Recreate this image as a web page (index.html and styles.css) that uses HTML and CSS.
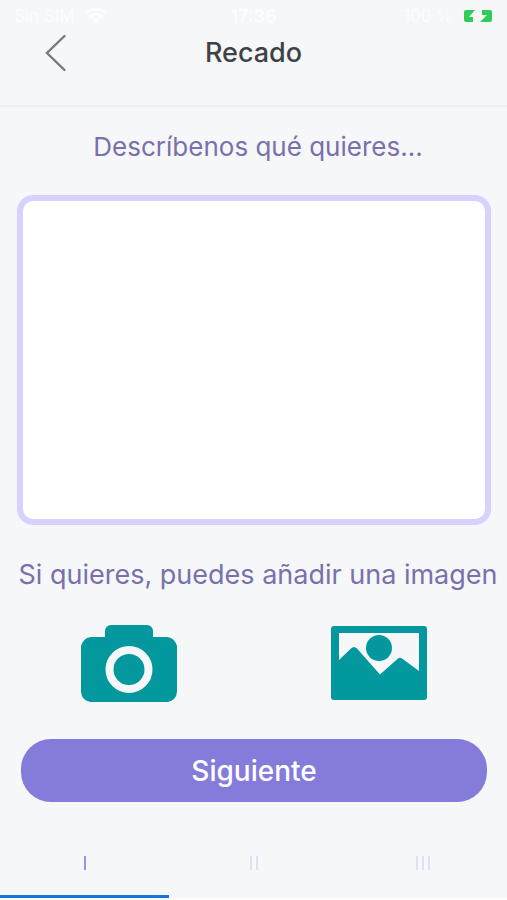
FILE: index.html
```html
<!DOCTYPE html>
<html lang="es">
<head>
<meta charset="utf-8">
<meta name="viewport" content="width=device-width, initial-scale=1">
<title>Recado</title>
<link rel="stylesheet" href="styles.css">
</head>
<body>
<div class="screen">
  <div class="status">
    <div class="status-side">
      <span>Sin SIM</span>
      <svg class="wifi" viewBox="0 0 22 16" aria-hidden="true"><path d="M1 5.500Q11-3 21 5.500M4.500 9Q11 3.500 17.500 9" fill="none" stroke="currentColor" stroke-width="3"/><path d="M7 11.500Q11 8.500 15 11.500L11 16Z" fill="currentColor"/></svg>
    </div>
    <span class="clock">17:36</span>
    <div class="status-side status-end">
      <span>100 %</span>
      <svg class="battery" viewBox="0 0 30 14" aria-hidden="true"><path d="M3 1H12L6 8H10V13H3Q1 13 1 11V3Q1 1 3 1ZM19 1H27Q29 1 29 3V11Q29 13 27 13H17L24 6H19Z" fill="#2dce58"/></svg>
    </div>
  </div>
  <header class="header">
    <button class="back" type="button" aria-label="Volver">
      <svg viewBox="0 0 24 40" aria-hidden="true"><path d="M20.500 3L3 20L20.500 37" fill="none" stroke="#747983" stroke-width="2.400" stroke-linecap="round"/></svg>
    </button>
    <h1 class="title">Recado</h1>
  </header>
  <main class="content">
    <label class="prompt" for="details">Descríbenos qué quieres...</label>
    <textarea class="details" id="details"></textarea>
    <p class="prompt hint">Si quieres, puedes añadir una imagen</p>
    <div class="sources">
      <button class="source" type="button" aria-label="Cámara">
        <svg viewBox="0 0 96 78" aria-hidden="true"><path d="M30 1H66L72 7V13H86L96 22V68L87 78H9L0 68V22L10 13H24V7Z" fill="#03989e"/><circle cx="30" cy="7" r="6" fill="#03989e"/><circle cx="66" cy="7" r="6" fill="#03989e"/><circle cx="11" cy="24" r="11" fill="#03989e"/><circle cx="85" cy="24" r="11" fill="#03989e"/><circle cx="10.500" cy="67.500" r="10.500" fill="#03989e"/><circle cx="85.500" cy="67.500" r="10.500" fill="#03989e"/><circle cx="48" cy="45.500" r="19.500" fill="none" stroke="#f5f7f9" stroke-width="8"/></svg>
      </button>
      <button class="source" type="button" aria-label="Galería">
        <svg viewBox="0 0 96 78" aria-hidden="true"><rect y="2" width="96" height="74" rx="3" fill="#03989e"/><path d="M8 9H88V47L71 34.500Q69 33 67 34.500L49 50.500L26 24.500Q23 21.500 20 24.500L8 36Z" fill="#f5f7f9"/><circle cx="48" cy="24" r="13" fill="#03989e"/></svg>
      </button>
    </div>
    <button class="next" type="button">Siguiente</button>
  </main>
  <nav class="steps" aria-label="Pasos">
    <button class="step active" type="button" aria-label="Paso 1" aria-current="step"><i></i></button>
    <button class="step" type="button" aria-label="Paso 2"><i></i><i></i></button>
    <button class="step" type="button" aria-label="Paso 3"><i></i><i></i><i></i></button>
  </nav>
</div>
</body>
</html>
```
FILE: styles.css
```css
* {
  box-sizing: border-box;
}

body {
  margin: 0;
  background: #f5f7f9;
  font-family: Inter, "Open Sans", sans-serif;
}

button {
  padding: 0;
  border: 0;
  background: none;
  font: inherit;
  cursor: pointer;
}

svg {
  display: block;
}

.screen {
  display: flex;
  flex-direction: column;
  min-height: 100vh;
  border-bottom: 2px solid #fdfdfe;
}

.status {
  display: grid;
  grid-template-columns: 1fr auto 1fr;
  align-items: center;
  height: 32px;
  padding: 0 14px;
  color: #fcfdfe;
  font-size: 17px;
}

.status-side {
  display: flex;
  align-items: center;
  gap: 10px;
}

.status-end {
  justify-content: flex-end;
}

.clock {
  font-size: 18px;
  font-weight: 600;
}

.wifi {
  width: 22px;
  height: 16px;
}

.battery {
  width: 30px;
  height: 14px;
}

.header {
  display: grid;
  grid-template-columns: 1fr auto 1fr;
  align-items: center;
  height: 75px;
  padding: 0 44px 32px;
  border-bottom: 2px solid #eceef0;
}

.back {
  justify-self: start;
}

.back svg {
  width: 24px;
  height: 40px;
}

.title {
  margin: 0;
  color: #3e4247;
  font-size: 27px;
  font-weight: 500;
  line-height: 32px;
}

.content {
  display: flex;
  flex: 1;
  flex-direction: column;
  padding: 24px 16px 0 17px;
}

.prompt {
  margin: 0;
  padding-left: 8px;
  color: #7a70ab;
  font-size: 26px;
  font-weight: 400;
  line-height: 32px;
  text-align: center;
}

.hint {
  margin: 0 -12px;
  font-size: 27px;
}

.details {
  flex: 1;
  min-height: 160px;
  margin: 32px 0 34px;
  padding: 12px;
  border: 6px solid #d7d1fd;
  border-radius: 16px;
  outline: 0;
  background: #fff;
  color: #3e4247;
  font: inherit;
  font-size: 24px;
  resize: none;
}

.sources {
  display: grid;
  grid-template-columns: 1fr 1fr;
  margin: 33px -13px 37px;
}

.source {
  justify-self: center;
}

.source svg {
  width: 96px;
  height: 78px;
}

.next {
  height: 63px;
  margin: 0 4px;
  border-radius: 30px;
  background: #857bda;
  color: #fff;
  font-size: 28px;
  font-weight: 500;
}

.steps {
  display: grid;
  grid-template-columns: repeat(3, 1fr);
  height: 96px;
}

.step {
  display: flex;
  align-items: center;
  justify-content: center;
  gap: 4px;
  padding-top: 28px;
  border-bottom: 3px solid transparent;
}

.step i {
  width: 2px;
  height: 14px;
  background: #e2ddf8;
}

.step.active {
  border-color: #1674df;
}

.step.active i {
  background: #9d91de;
}
```
